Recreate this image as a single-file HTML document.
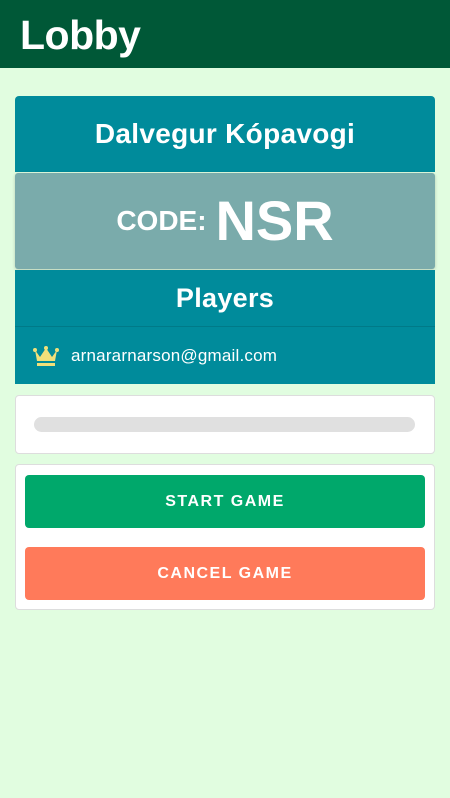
<!DOCTYPE html>
<html><head><style>
body{margin:0;width:450px;height:798px;background:#e1fde0;font-family:"Liberation Sans",sans-serif;position:relative;overflow:hidden}
.a{position:absolute;box-sizing:border-box}
.hdr{left:0;top:0;width:450px;height:68px;background:#005837;color:#fff;font-weight:bold;font-size:41px;padding:12px 0 0 20px;letter-spacing:-0.5px}
.t{left:15px;width:420px;color:#fff;font-weight:bold;text-align:center}
</style></head><body>
<div class="a hdr">Lobby</div>
<div class="a t" style="top:96px;height:76px;background:#008b9b;border-radius:4px 4px 0 0;font-size:28px;line-height:76px;letter-spacing:0.3px">Dalvegur Kópavogi</div>
<div class="a t" style="top:173px;height:96px;background:#7aabab;border-radius:3px;box-shadow:0 1px 3px rgba(0,0,0,.2);line-height:96px"><span style="font-size:28px;vertical-align:middle">CODE:</span>&nbsp;&nbsp;<span style="font-size:56px;vertical-align:middle">NSR</span></div>
<div class="a t" style="top:270px;height:57px;background:#008b9b;border-bottom:1px solid #007a88;font-size:27px;line-height:56px;letter-spacing:0.3px">Players</div>
<div class="a t" style="top:327px;height:57px;background:#008b9b;text-align:left;font-weight:normal;font-size:17px;line-height:57px;padding-left:56px;letter-spacing:0.2px">arnararnarson@gmail.com
<svg class="a" style="left:18px;top:19px" width="26" height="20" viewBox="0 0 26 20"><path d="M2 4 L7 11 L13 2 L19 11 L24 4 L22 15 L4 15 Z" fill="#f0e07a"/><circle cx="2" cy="4" r="2" fill="#f0e07a"/><circle cx="13" cy="2" r="2" fill="#f0e07a"/><circle cx="24" cy="4" r="2" fill="#f0e07a"/><rect x="4" y="17" width="18" height="3" fill="#f0e07a"/></svg></div>
<div class="a" style="left:15px;top:395px;width:420px;height:59px;background:#fff;border:1px solid #ddd;border-radius:4px"></div>
<div class="a" style="left:34px;top:417px;width:381px;height:15px;background:#e0e0e0;border-radius:8px"></div>
<div class="a" style="left:15px;top:464px;width:420px;height:146px;background:#fff;border:1px solid #ddd;border-radius:4px"></div>
<div class="a t" style="left:25px;width:400px;top:475px;height:53px;background:#00a86b;border-radius:4px;font-size:16px;line-height:53px;letter-spacing:1.5px">START GAME</div>
<div class="a t" style="left:25px;width:400px;top:547px;height:53px;background:#ff7a5a;border-radius:4px;font-size:16px;line-height:53px;letter-spacing:1.5px">CANCEL GAME</div>
</body></html>
